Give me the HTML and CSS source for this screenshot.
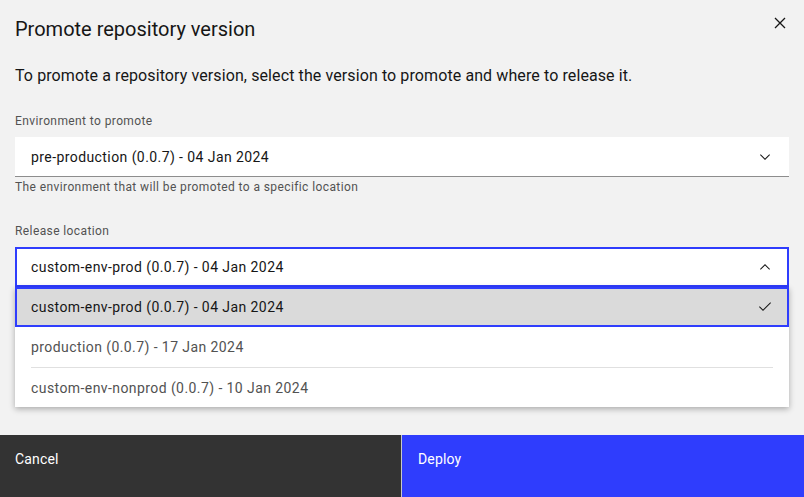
FILE: index.html
```html
<!DOCTYPE html>
<html lang="en">
<head>
<meta charset="utf-8">
<title>Promote repository version</title>
<link rel="stylesheet" href="styles.css">
</head>
<body>
<div class="modal">
  <header class="modal-header">
    <h2 class="title">Promote repository version</h2>
    <button class="close" aria-label="Close">
      <svg width="20" height="20" viewBox="0 0 20 20"><path d="M5 5L15 15M15 5L5 15" stroke="#161616" stroke-width="1.3" fill="none"/></svg>
    </button>
  </header>
  <div class="modal-body">
    <p class="desc">To promote a repository version, select the version to promote and where to release it.</p>
    <div class="form-item first">
      <label class="label">Environment to promote</label>
      <div class="field">
        <span class="field-text">pre-production (0.0.7) - 04 Jan 2024</span>
        <svg class="icon" width="16" height="16" viewBox="0 0 16 16"><path d="M8 11L3 6 3.7 5.3 8 9.6 12.3 5.3 13 6z" fill="#161616"/></svg>
      </div>
      <div class="helper">The environment that will be promoted to a specific location</div>
    </div>
    <div class="form-item second">
      <label class="label">Release location</label>
      <div class="listbox">
        <div class="field field-open">
          <span class="field-text">custom-env-prod (0.0.7) - 04 Jan 2024</span>
          <svg class="icon" width="16" height="16" viewBox="0 0 16 16"><path d="M8 5L13 10 12.3 10.7 8 6.4 3.7 10.7 3 10z" fill="#161616"/></svg>
        </div>
        <ul class="menu">
          <li class="option selected">
            <div class="option-inner">
              <span>custom-env-prod (0.0.7) - 04 Jan 2024</span>
              <svg class="icon" width="16" height="16" viewBox="0 0 16 16"><path d="M6 10.6L2.7 7.3 2 8 6 12 14 4 13.3 3.3z" fill="#161616"/></svg>
            </div>
          </li>
          <li class="option">
            <div class="option-inner"><span>production (0.0.7) - 17 Jan 2024</span></div>
          </li>
          <li class="option">
            <div class="option-inner sep"><span>custom-env-nonprod (0.0.7) - 10 Jan 2024</span></div>
          </li>
        </ul>
      </div>
    </div>
  </div>
  <footer class="modal-footer">
    <button class="btn btn-secondary">Cancel</button>
    <button class="btn btn-primary">Deploy</button>
  </footer>
</div>
</body>
</html>
```
FILE: styles.css
```css
* { box-sizing: border-box; }
html, body { margin: 0; padding: 0; }
body {
  font-family: Roboto, "Noto Sans", sans-serif;
  color: #161616;
  background: #f2f2f2;
}
.modal {
  height: 100vh;
  display: flex;
  flex-direction: column;
  background: #f2f2f2;
}
.modal-header {
  position: relative;
  padding: 15px 48px 0 15px;
}
.title {
  margin: 0;
  font-size: 20px;
  line-height: 28px;
  font-weight: 400;
  color: #161616;
}
.close {
  position: absolute;
  top: 0;
  right: 0;
  width: 48px;
  height: 46px;
  border: 0;
  background: transparent;
  padding: 0;
  display: flex;
  align-items: center;
  justify-content: center;
  cursor: pointer;
}
.modal-body {
  padding: 0 15px;
}
.desc {
  margin: 21px 0 0;
  font-size: 16px;
  line-height: 24px;
  letter-spacing: 0.1px;
  color: #161616;
}
.form-item.first { margin-top: 25px; }
.form-item.second { margin-top: 28px; }
.label {
  display: block;
  font-size: 12px;
  line-height: 16px;
  letter-spacing: 0.4px;
  color: #525252;
  margin-bottom: 8px;
}
.field {
  height: 40px;
  background: #ffffff;
  border-bottom: 1px solid #8d8d8d;
  display: flex;
  align-items: center;
  justify-content: space-between;
  padding: 0 16px;
  font-size: 14px;
  letter-spacing: 0.42px;
  color: #161616;
}
.field-open {
  outline: 2px solid #2f3dfd;
  outline-offset: -2px;
  border-bottom: 0;
}
.icon { flex: none; display: block; }
.helper {
  margin-top: 2px;
  font-size: 12px;
  line-height: 16px;
  letter-spacing: 0.4px;
  color: #525252;
}
.listbox { position: relative; }
.menu {
  position: absolute;
  top: 100%;
  left: 0;
  right: 0;
  margin: 0;
  padding: 0;
  list-style: none;
  background: #ffffff;
  box-shadow: 0 2px 6px rgba(0, 0, 0, 0.3);
  z-index: 5;
}
.option {
  height: 40px;
  font-size: 14px;
  letter-spacing: 0.42px;
  color: #525252;
}
.option.selected {
  background: #dadada;
  color: #161616;
  outline: 2px solid #2f3dfd;
  outline-offset: -2px;
}
.option-inner {
  margin: 0 16px;
  height: 40px;
  display: flex;
  align-items: center;
  justify-content: space-between;
}
.option-inner.sep { border-top: 1px solid #e0e0e0; }
.modal-footer {
  margin-top: auto;
  height: 62px;
  display: flex;
  gap: 1px;
  background: #c8c8c8;
}
.btn {
  flex: 1;
  border: 0;
  margin: 0;
  text-align: left;
  font-family: Roboto, "Noto Sans", sans-serif;
  font-size: 14px;
  line-height: 18px;
  letter-spacing: 0.16px;
  color: #ffffff;
  padding: 15px 16px 0;
  display: flex;
  align-items: flex-start;
  cursor: pointer;
}
.btn-secondary { background: #333333; padding-left: 15px; }
.btn-primary { background: #2f3dfd; }
```
